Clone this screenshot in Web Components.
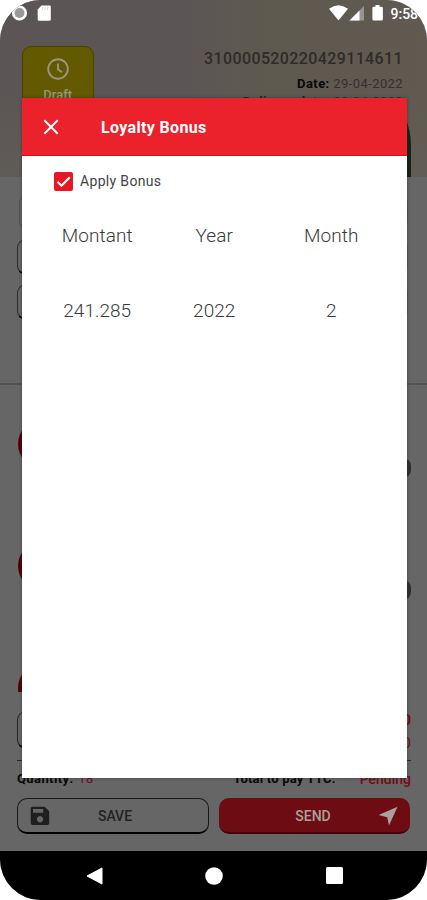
<!DOCTYPE html>
<html lang="en">
<head>
<meta charset="utf-8">
<title>Loyalty Bonus</title>
<style>
html,body{margin:0;background:#fff;font-family:Roboto,"Liberation Sans",sans-serif}
</style>
</head>
<body>
<phone-screen>
  <status-bar slot="status"></status-bar>
  <order-header></order-header>
  <order-fields></order-fields>
  <order-lines></order-lines>
  <order-totals></order-totals>
  <action-row>
    <action-button kind="save">SAVE</action-button>
    <action-button kind="send">SEND</action-button>
  </action-row>
  <nav-bar slot="nav"></nav-bar>
  <bonus-dialog slot="dialog">
    <span slot="title">Loyalty Bonus</span>
    <check-option>Apply Bonus</check-option>
    <bonus-table></bonus-table>
  </bonus-dialog>
</phone-screen>
<script>
const define = (name, markup) => customElements.define(name, class extends HTMLElement {
  constructor() {
    super();
    const t = document.createElement('template');
    t.innerHTML = markup;
    this.attachShadow({mode: 'open'}).appendChild(t.content.cloneNode(true));
  }
});

define('phone-screen', `<style>
:host{display:block;width:427px;height:900px}
.screen{position:relative;height:900px;overflow:hidden;border-radius:41px;background:#666;display:flex;flex-direction:column}
.content{flex:1;display:flex;flex-direction:column;min-height:0}
.dialog{position:absolute;left:22px;top:98px;width:384.5px;height:680px}
</style><div class="screen"><slot name="status"></slot><div class="content"><slot></slot></div><slot name="nav"></slot><div class="dialog"><slot name="dialog"></slot></div></div>`);

define('status-bar', `<style>
:host{display:block;height:28px;background:linear-gradient(90deg,#5b5655 0,#5b5655 44%,#5e594f 60%,#605a50 100%)}
.row{display:flex;align-items:flex-start;justify-content:space-between;height:28px;width:442.500px;color:#fff}
.row svg{display:block}
.right{display:flex}
.time{font-size:14px;font-weight:500;line-height:16px;padding-top:6px;width:52px;white-space:nowrap}
</style><div class="row">
<svg width="60" height="28"><circle cx="19.500" cy="13" r="6.300" fill="#999" stroke="#fff" stroke-width="2.600"/><path d="M41.500 5.500h8q1.300 0 1.300 1.300v12.700q0 1.200-1.300 1.200H39q-1.300 0-1.300-1.200V9.600z" fill="#fff"/><path d="M42.500 7v3M45 7v3M47.600 7v3" stroke="#ccc" stroke-width=".7"/></svg>
<div class="right"><svg width="62" height="28" viewBox="329.500 0 62 28"><path d="M329.500 8.800q9.500-7 19 0L339 20.500z" fill="#fff"/><path d="M364.500 6v14.600H350z" fill="#989490"/><path d="M360 10.600v10h-10z" fill="#fff"/><path d="M376 5h4v1.800h2q1.400 0 1.400 1.300v11q0 1.500-1.400 1.500h-7.700q-1.400 0-1.400-1.500v-11q0-1.300 1.400-1.300H376z" fill="#fff"/></svg><div class="time">9:58</div></div>
</div>`);

define('order-header', `<style>
:host{display:block;height:149px;background:linear-gradient(180deg,transparent 40%,#66635b66 100%),linear-gradient(90deg,#5b5655 0,#5b5655 44%,#5e594f 60%,#605a50 100%)}
.wrap{position:relative;display:flex;justify-content:space-between;align-items:flex-start;padding:18px 24px 0 21.500px;height:131px}
.badge{box-sizing:border-box;width:72.500px;height:66px;border:1px solid #484300;border-radius:9px;background:#625900;color:#989581;display:flex;flex-direction:column;align-items:center;padding-top:11px;font-size:13px;font-weight:500;line-height:15px;gap:7px}
.info{display:flex;flex-direction:column;align-items:flex-end;color:#2e2b28}
.num{font-size:16px;line-height:20px;font-weight:500;letter-spacing:.38px;margin-top:3px}
.date{font-size:13px;line-height:18px;margin-top:6px;color:#34302c;white-space:pre;letter-spacing:.4px}
.date b{color:#080808;font-weight:700;letter-spacing:.45px}
.date+.date{margin-top:0}
.date+.date b{color:#222;letter-spacing:.5px}
.bottle{position:absolute;left:400px;top:90px}
</style><div class="wrap"><div class="badge"><svg width="22" height="22" viewBox="0 0 22 22" fill="none" stroke="#989581" stroke-width="1.900"><circle cx="11" cy="11" r="9.800"/><path d="M11 5.500v6l4 2.600"/></svg><span>Draft</span></div>
<div class="info"><div class="num">310000520220429114611</div><div class="date"><b>Date:</b> 29-04-2022</div><div class="date"><b>Delivery date:</b> 29-04-2022</div></div>
<svg class="bottle" width="13" height="59"><path d="M5 0q6 11 6 29v30H0V0z" fill="#14251a"/></svg></div>`);

define('order-fields', `<style>
:host{display:block;box-sizing:border-box;height:208px;border-bottom:2px solid #525252;padding:17px 19px 0 17px}
.stack{display:flex;flex-direction:column;gap:9px}
.f{box-sizing:border-box;height:36px;border:1px solid #2b2b2b;border-bottom:2px solid #000;border-radius:9px;border-right-color:#585858}
.f:first-child{border-color:#555;margin:0 0 0 2px}
</style><div class="stack"><div class="f"></div><div class="f"></div><div class="f"></div></div>`);

define('order-lines', `<style>
:host{display:block;height:307px;overflow:hidden}
.list{display:flex;flex-direction:column;gap:72px;padding:34px 16.500px 0 17.700px}
.line{height:50px;display:flex;justify-content:space-between;align-items:flex-start}
.dot{width:50px;height:50px;border-radius:50%;background:#500006}
.qty{width:44px;height:20px;border-radius:8px;background:#303030;margin-top:39px}
</style><div class="list"><div class="line"><div class="dot"></div><div class="qty"></div></div><div class="line"><div class="dot"></div><div class="qty"></div></div><div class="line"><div class="dot"></div><div class="qty"></div></div></div>`);

define('order-totals', `<style>
:host{display:block;box-sizing:border-box;height:98px;padding:19px 16px 0 17px;font-size:13px;font-weight:700;color:#080808}
.top{display:flex;justify-content:space-between;height:49px;border-bottom:1px solid #282828}
.f{box-sizing:border-box;width:180px;height:38px;border:1px solid #222;border-bottom:2.500px solid #000;border-radius:9px}
.v{color:#7a0b12;display:flex;flex-direction:column;align-items:flex-end;font-size:15px;line-height:23px;margin-top:-2px}
.v span+span{font-weight:400}
.sum{display:flex;justify-content:space-between;line-height:18px;margin-top:9px}
.sum i{font-style:normal;color:#7a0b12}
.q{letter-spacing:.4px}
.q i{font-weight:400;margin-left:1px}
.p{display:flex;gap:24px}
.p span{letter-spacing:.2px}
.p i{font-weight:500;font-size:14px}
</style><div class="top"><div class="f"></div><div class="v"><span>0</span><span>0</span></div></div>
<div class="sum"><span class="q">Quantity: <i>18</i></span><span class="p"><span>Total to pay TTC:</span><i>Pending</i></span></div>`);

define('action-row', `<style>
:host{display:block;padding:7.500px 16px 0 17px}
div{display:grid;grid-template-columns:192px 192px;gap:10px}
</style><div><slot></slot></div>`);

customElements.define('action-button', class extends HTMLElement {
  connectedCallback() {
    const save = this.getAttribute('kind') === 'save';
    this.attachShadow({mode: 'open'}).innerHTML = `<style>
:host{display:block}
.b{box-sizing:border-box;height:36px;border-radius:10px;display:grid;grid-template-columns:32px 1fr 32px;align-items:center;justify-items:center;font-size:14px;font-weight:500;padding:1px 6px 0}
.save{border:1px solid #191919;border-bottom:2.500px solid #000;color:#222;padding-right:0}
.send{background:#6d0c12;border-bottom:2px solid #450008;color:#aaa09d;width:191px;padding-top:3px}
svg{display:block}
.save span{margin-right:2px}.send span{margin-left:-3px}
</style><div class="b ${save ? 'save' : 'send'}">${save
? '<svg width="20" height="20" viewBox="0 0 20 20"><path fill-rule="evenodd" d="M2.500.800h12.300L19.200 5.200v11.800q0 2-2 2H2.700q-2 0-2-2v-14q0-2.200 1.800-2.200zM3 3v3.700h10.200V3zM10 10a3.200 3.200 0 1 0 .1 0z" fill="#1f1f1f"/></svg><span><slot></slot></span><i></i>'
: '<i></i><span><slot></slot></span><svg width="20" height="20" viewBox="0 0 20 20"><path d="M19.500.700L11 19.500 9.200 11.200.500 9z" fill="#aaa09d"/></svg>'}</div>`;
  }
});

define('nav-bar', `<style>
:host{display:block;height:49px;background:#000}
div{display:flex;justify-content:space-between;align-items:center;height:49px;padding:0 84px 0 85.500px}
</style><div><svg width="17" height="18"><path d="M16 1v16L1 9z" fill="#fff" stroke="#fff" stroke-linejoin="round"/></svg><svg width="18" height="18"><circle cx="9" cy="9" r="8.800" fill="#fff"/></svg><svg width="17" height="17"><rect width="17" height="17" rx="1.500" fill="#fff"/></svg></div>`);

define('bonus-dialog', `<style>
:host{display:block;height:680px;background:#fff;box-shadow:0 0 3px #2228}
header{box-sizing:border-box;height:57.500px;background:#eb212c;border-bottom:1.500px solid #d80d18;display:flex;align-items:center;padding:2px 0 0 21px;gap:42px;color:#fff;font-size:16px;font-weight:700;letter-spacing:.35px}
svg{display:block}
header slot{display:block;margin-top:1px}
</style><header><svg width="16" height="16" viewBox="0 0 16 16"><path d="M1.300 1.300l13.400 13.400M14.700 1.300L1.300 14.700" stroke="#fff" stroke-width="2"/></svg><slot name="title"></slot></header><slot></slot>`);

define('check-option', `<style>
:host{display:block}
div{display:flex;align-items:center;gap:7px;padding:15.500px 0 0 32px;height:20px;font-size:14px;color:#444;letter-spacing:.33px}
svg{display:block}
</style><div><svg width="19" height="19"><rect width="19" height="19" rx="2" fill="#ea1522"/><path d="M3.500 9.800l4 4L15.800 5.300" fill="none" stroke="#fff" stroke-width="2.200"/></svg><span><slot></slot></span></div>`);

define('bonus-table', `<style>
:host{display:block;padding:32px 17px 0 16.700px}
.g{display:grid;grid-template-columns:repeat(3,117px);grid-auto-rows:75px;text-align:center;font-size:19px;line-height:26px;color:#3a3a3a;font-weight:300}
.g :nth-child(-n+3){letter-spacing:.1px}
</style><div class="g"><span>Montant</span><span>Year</span><span>Month</span><span>241.285</span><span>2022</span><span>2</span></div>`);
</script>
</body>
</html>
